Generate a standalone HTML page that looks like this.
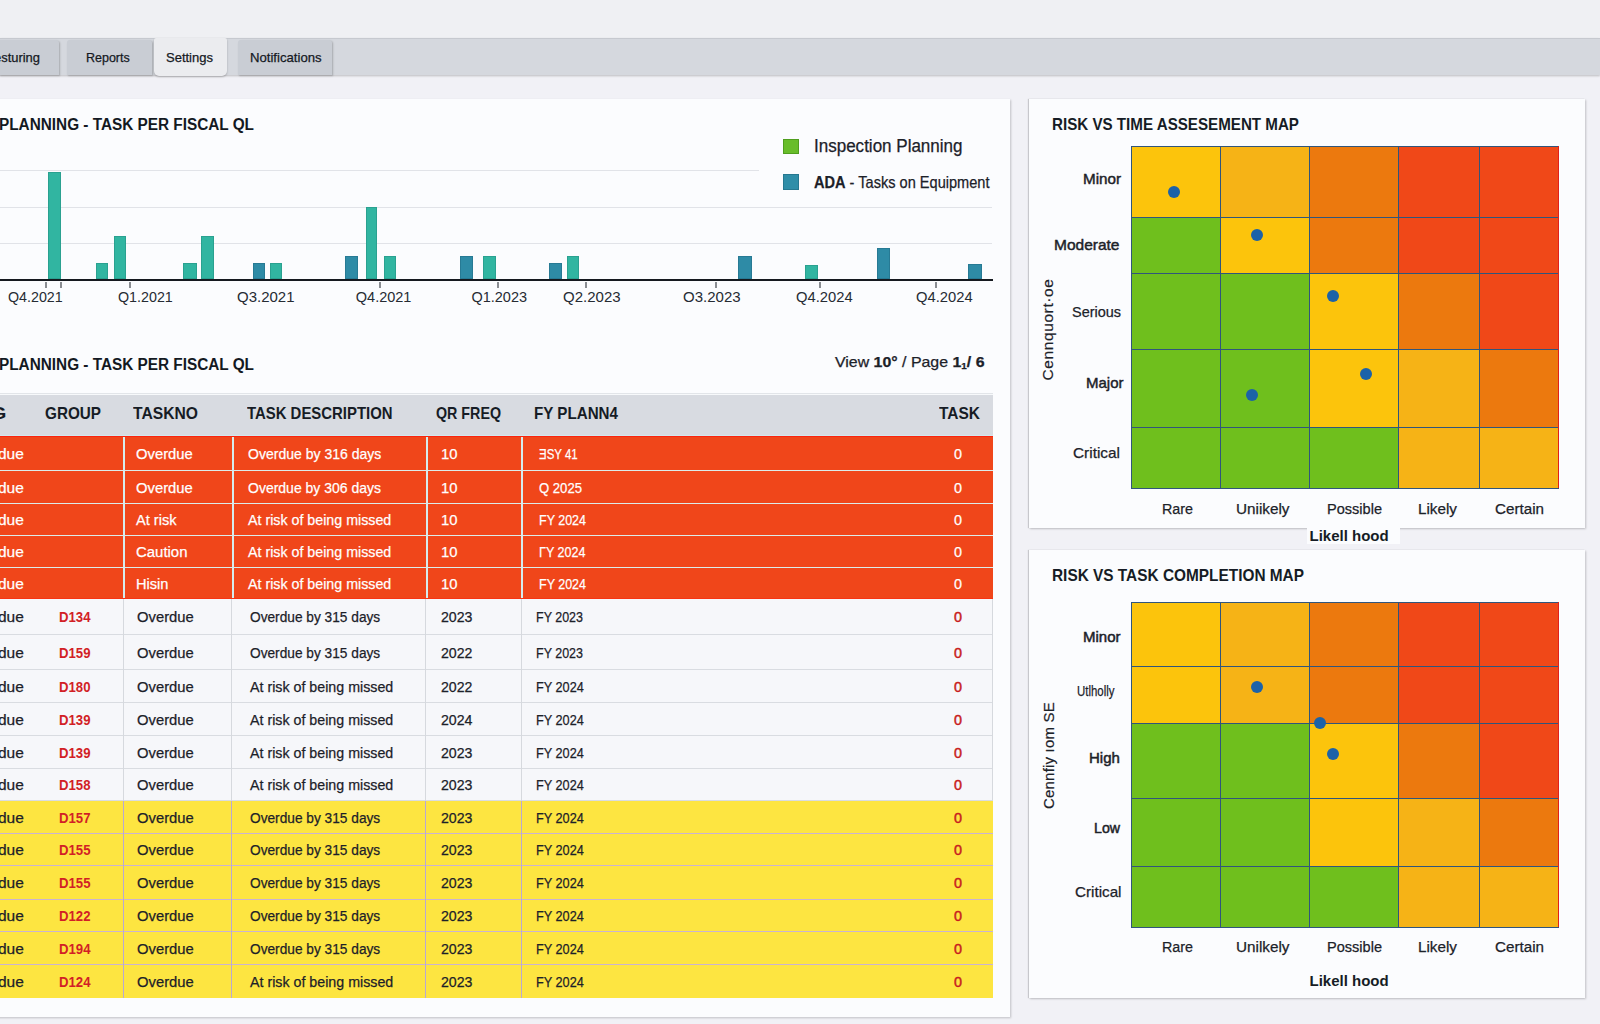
<!DOCTYPE html><html><head><meta charset="utf-8"><style>
*{margin:0;padding:0;box-sizing:border-box}
html,body{width:1600px;height:1024px;overflow:hidden}
body{position:relative;background:#f1f1f6;font-family:"Liberation Sans",sans-serif;color:#1b212b}
.a{position:absolute;white-space:nowrap}
.dot{position:absolute;width:12px;height:12px;border-radius:50%;background:#1c62a8}
</style></head><body>
<div class="a" style="left:0;top:0;width:1600px;height:38px;background:#eff0f3"></div>
<div class="a" style="left:0;top:38px;width:1600px;height:37px;background:#d5d8de;border-top:1px solid #c6c9cf;box-shadow:0 1px 2px rgba(0,0,0,.22)"></div>
<div class="a" style="left:-30px;top:40px;width:89px;height:35px;background:#c9cdd4;border-radius:3px 3px 0 0;box-shadow:1px 1px 2px rgba(0,0,0,.22)"></div>
<div class="a" style="left:-6.00px;top:50.70px;font-size:13px;line-height:13px;color:#15191f;transform:scaleX(0.9946);transform-origin:0 0;-webkit-text-stroke:0.25px #15191f">esturing</div>
<div class="a" style="left:67px;top:40px;width:85px;height:35px;background:#c9cdd4;border-radius:3px 3px 0 0;box-shadow:1px 1px 2px rgba(0,0,0,.22)"></div>
<div class="a" style="left:86.25px;top:50.70px;font-size:13px;line-height:13px;color:#15191f;transform:scaleX(0.9609);transform-origin:0 0;-webkit-text-stroke:0.25px #15191f">Reports</div>
<div class="a" style="left:154px;top:38px;width:73px;height:38px;background:#ebecef;border-radius:2px 2px 5px 5px;box-shadow:0 1px 2px rgba(0,0,0,.25)"></div>
<div class="a" style="left:166.00px;top:50.70px;font-size:13px;line-height:13px;color:#15191f;-webkit-text-stroke:0.25px #15191f">Settings</div>
<div class="a" style="left:238px;top:40px;width:94px;height:35px;background:#c9cdd4;border-radius:3px 3px 0 0;box-shadow:1px 1px 2px rgba(0,0,0,.22)"></div>
<div class="a" style="left:250.20px;top:50.70px;font-size:13px;line-height:13px;color:#15191f;transform:scaleX(1.0111);transform-origin:0 0;-webkit-text-stroke:0.25px #15191f">Notifications</div>
<div class="a" style="left:-10px;top:99px;width:1020px;height:918px;background:#fbfcfe;box-shadow:1px 1px 2px rgba(0,0,0,.2)"></div>
<div class="a" style="left:1029px;top:99px;width:556px;height:429px;background:#fbfcfe;box-shadow:-1px 0 1px rgba(0,0,0,.16),1px 1px 2px rgba(0,0,0,.2)"></div>
<div class="a" style="left:1029px;top:550px;width:556px;height:448px;background:#fbfcfe;box-shadow:-1px 0 1px rgba(0,0,0,.16),1px 1px 2px rgba(0,0,0,.2)"></div>
<div class="a" style="left:-1.50px;top:116.24px;font-size:17.2px;line-height:17.2px;color:#131922;font-weight:bold;transform:scaleX(0.8921);transform-origin:0 0">PLANNING - TASK PER FISCAL QL</div>
<div class="a" style="left:783px;top:139px;width:16px;height:15px;background:#68bd2a;border:1px solid #4f9e1e"></div>
<div class="a" style="left:783px;top:174px;width:16px;height:16px;background:#2f8ea8;border:1px solid #267890"></div>
<div class="a" style="left:813.50px;top:138.44px;font-size:17.5px;line-height:17.5px;color:#1c2129;transform:scaleX(0.9722);transform-origin:0 0;-webkit-text-stroke:0.25px #1c2129">Inspection Planning</div>
<div class="a" style="left:813.50px;top:173.93px;font-size:16.5px;line-height:16.5px;color:#1c2129;transform:scaleX(0.8832);transform-origin:0 0;-webkit-text-stroke:0.25px #1c2129"><b>ADA</b> - Tasks on Equipment</div>
<div class="a" style="left:0;top:170px;width:759px;height:1px;background:#e1e3e8"></div>
<div class="a" style="left:0;top:207px;width:992px;height:1px;background:#e1e3e8"></div>
<div class="a" style="left:0;top:243px;width:992px;height:1px;background:#e1e3e8"></div>
<div class="a" style="left:0;top:278.5px;width:993px;height:2px;background:#15191f"></div>
<div class="a" style="left:48px;top:172px;width:13px;height:107px;background:#31b5a1;border:1px solid #2aa190"></div>
<div class="a" style="left:96px;top:263px;width:12px;height:16px;background:#31b5a1;border:1px solid #2aa190"></div>
<div class="a" style="left:114px;top:236px;width:12px;height:43px;background:#31b5a1;border:1px solid #2aa190"></div>
<div class="a" style="left:183px;top:263px;width:14px;height:16px;background:#31b5a1;border:1px solid #2aa190"></div>
<div class="a" style="left:201px;top:236px;width:13px;height:43px;background:#31b5a1;border:1px solid #2aa190"></div>
<div class="a" style="left:253px;top:263px;width:12px;height:16px;background:#2e8ba6;border:1px solid #277a94"></div>
<div class="a" style="left:270px;top:263px;width:12px;height:16px;background:#31b5a1;border:1px solid #2aa190"></div>
<div class="a" style="left:345px;top:256px;width:13px;height:23px;background:#2e8ba6;border:1px solid #277a94"></div>
<div class="a" style="left:366px;top:207px;width:11px;height:72px;background:#31b5a1;border:1px solid #2aa190"></div>
<div class="a" style="left:384px;top:256px;width:12px;height:23px;background:#31b5a1;border:1px solid #2aa190"></div>
<div class="a" style="left:460px;top:256px;width:13px;height:23px;background:#2e8ba6;border:1px solid #277a94"></div>
<div class="a" style="left:483px;top:256px;width:13px;height:23px;background:#31b5a1;border:1px solid #2aa190"></div>
<div class="a" style="left:549px;top:263px;width:13px;height:16px;background:#2e8ba6;border:1px solid #277a94"></div>
<div class="a" style="left:567px;top:256px;width:12px;height:23px;background:#31b5a1;border:1px solid #2aa190"></div>
<div class="a" style="left:738px;top:256px;width:14px;height:23px;background:#2e8ba6;border:1px solid #277a94"></div>
<div class="a" style="left:805px;top:265px;width:13px;height:14px;background:#31b5a1;border:1px solid #2aa190"></div>
<div class="a" style="left:877px;top:248px;width:13px;height:31px;background:#2e8ba6;border:1px solid #277a94"></div>
<div class="a" style="left:968px;top:264px;width:14px;height:15px;background:#2e8ba6;border:1px solid #277a94"></div>
<div class="a" style="left:45px;top:282px;width:1.5px;height:6px;background:#8a8d92"></div>
<div class="a" style="left:60px;top:282px;width:1.5px;height:6px;background:#8a8d92"></div>
<div class="a" style="left:129px;top:282px;width:1.5px;height:6px;background:#8a8d92"></div>
<div class="a" style="left:379px;top:282px;width:1.5px;height:6px;background:#8a8d92"></div>
<div class="a" style="left:497px;top:282px;width:1.5px;height:6px;background:#8a8d92"></div>
<div class="a" style="left:585px;top:282px;width:1.5px;height:6px;background:#8a8d92"></div>
<div class="a" style="left:715px;top:282px;width:1.5px;height:6px;background:#8a8d92"></div>
<div class="a" style="left:819px;top:282px;width:1.5px;height:6px;background:#8a8d92"></div>
<div class="a" style="left:935px;top:282px;width:1.5px;height:6px;background:#8a8d92"></div>
<div class="a" style="left:7.80px;top:290.23px;font-size:14.5px;line-height:14.5px;color:#262b33;transform:scaleX(0.9831);transform-origin:0 0">Q4.2021</div>
<div class="a" style="left:117.60px;top:290.23px;font-size:14.5px;line-height:14.5px;color:#262b33;transform:scaleX(0.9849);transform-origin:0 0">Q1.2021</div>
<div class="a" style="left:237.00px;top:290.23px;font-size:14.5px;line-height:14.5px;color:#262b33;transform:scaleX(1.0334);transform-origin:0 0">Q3.2021</div>
<div class="a" style="left:355.80px;top:290.23px;font-size:14.5px;line-height:14.5px;color:#262b33">Q4.2021</div>
<div class="a" style="left:471.40px;top:290.23px;font-size:14.5px;line-height:14.5px;color:#262b33">Q1.2023</div>
<div class="a" style="left:562.90px;top:290.23px;font-size:14.5px;line-height:14.5px;color:#262b33;transform:scaleX(1.0352);transform-origin:0 0">Q2.2023</div>
<div class="a" style="left:683.20px;top:290.23px;font-size:14.5px;line-height:14.5px;color:#262b33;transform:scaleX(1.0352);transform-origin:0 0">O3.2023</div>
<div class="a" style="left:795.70px;top:290.23px;font-size:14.5px;line-height:14.5px;color:#262b33;transform:scaleX(1.0172);transform-origin:0 0">Q4.2024</div>
<div class="a" style="left:915.50px;top:290.23px;font-size:14.5px;line-height:14.5px;color:#262b33;transform:scaleX(1.0172);transform-origin:0 0">Q4.2024</div>
<div class="a" style="left:-1.50px;top:355.84px;font-size:17.2px;line-height:17.2px;color:#131922;font-weight:bold;transform:scaleX(0.8921);transform-origin:0 0">PLANNING - TASK PER FISCAL QL</div>
<div class="a" style="left:835.00px;top:355.03px;font-size:14.5px;line-height:14.5px;color:#1c2129;transform:scaleX(1.0965);transform-origin:0 0;-webkit-text-stroke:0.25px #1c2129">View <b>10°</b> / Page <b>1<span style="font-size:9px;vertical-align:-2px">1</span>/ 6</b></div>
<div class="a" style="left:0;top:393px;width:993px;height:43px;background:#d8dbe1;border-top:1px solid #e2e5e9"></div>
<div class="a" style="left:0;top:394px;width:993px;height:1px;background:#f7f9fb"></div>
<div class="a" style="left:0;top:435px;width:993px;height:1px;background:#d3e9ee"></div>
<div class="a" style="left:-10.00px;top:404.83px;font-size:16.5px;line-height:16.5px;color:#161c25;font-weight:bold;transform:scaleX(1.2847);transform-origin:0 0">G</div>
<div class="a" style="left:44.50px;top:404.83px;font-size:16.5px;line-height:16.5px;color:#161c25;font-weight:bold;transform:scaleX(0.9254);transform-origin:0 0">GROUP</div>
<div class="a" style="left:133.00px;top:404.83px;font-size:16.5px;line-height:16.5px;color:#161c25;font-weight:bold;transform:scaleX(0.9496);transform-origin:0 0">TASKNO</div>
<div class="a" style="left:246.50px;top:404.83px;font-size:16.5px;line-height:16.5px;color:#161c25;font-weight:bold;transform:scaleX(0.9035);transform-origin:0 0">TASK DESCRIPTION</div>
<div class="a" style="left:436.00px;top:404.83px;font-size:16.5px;line-height:16.5px;color:#161c25;font-weight:bold;transform:scaleX(0.8647);transform-origin:0 0">QR FREQ</div>
<div class="a" style="left:533.50px;top:404.83px;font-size:16.5px;line-height:16.5px;color:#161c25;font-weight:bold;transform:scaleX(0.9191);transform-origin:0 0">FY PLANN4</div>
<div class="a" style="left:938.50px;top:404.83px;font-size:16.5px;line-height:16.5px;color:#161c25;font-weight:bold;transform:scaleX(0.9381);transform-origin:0 0">TASK</div>
<div class="a" style="left:0;top:436px;width:993px;height:35px;background:#f0461a;border-bottom:1.5px solid #dcecea"></div>
<div class="a" style="left:123px;top:436px;width:1.5px;height:35px;background:#d6eced"></div>
<div class="a" style="left:232px;top:436px;width:1.5px;height:35px;background:#d6eced"></div>
<div class="a" style="left:426px;top:436px;width:1.5px;height:35px;background:#d6eced"></div>
<div class="a" style="left:521px;top:436px;width:1.5px;height:35px;background:#d6eced"></div>
<div class="a" style="left:-2.00px;top:445.78px;font-size:15.5px;line-height:15.5px;color:#ffffff;-webkit-text-stroke:0.25px #ffffff">due</div>
<div class="a" style="left:136.00px;top:445.78px;font-size:15.5px;line-height:15.5px;color:#ffffff;transform:scaleX(0.9554);transform-origin:0 0;-webkit-text-stroke:0.25px #ffffff">Overdue</div>
<div class="a" style="left:248.00px;top:445.78px;font-size:15.5px;line-height:15.5px;color:#ffffff;transform:scaleX(0.9047);transform-origin:0 0;-webkit-text-stroke:0.25px #ffffff">Overdue by 316 days</div>
<div class="a" style="left:441.00px;top:445.78px;font-size:15.5px;line-height:15.5px;color:#ffffff;transform:scaleX(0.9565);transform-origin:0 0;-webkit-text-stroke:0.25px #ffffff">10</div>
<div class="a" style="left:538.50px;top:445.78px;font-size:15.5px;line-height:15.5px;color:#ffffff;transform:scaleX(0.7400);transform-origin:0 0;-webkit-text-stroke:0.25px #ffffff">ƎSY 41</div>
<div class="a" style="left:954.30px;top:445.78px;font-size:15.5px;line-height:15.5px;color:#ffffff;transform:scaleX(0.9275);transform-origin:0 0;-webkit-text-stroke:0.25px #ffffff">0</div>
<div class="a" style="left:0;top:471px;width:993px;height:33px;background:#f0461a;border-bottom:1.5px solid #dcecea"></div>
<div class="a" style="left:123px;top:471px;width:1.5px;height:33px;background:#d6eced"></div>
<div class="a" style="left:232px;top:471px;width:1.5px;height:33px;background:#d6eced"></div>
<div class="a" style="left:426px;top:471px;width:1.5px;height:33px;background:#d6eced"></div>
<div class="a" style="left:521px;top:471px;width:1.5px;height:33px;background:#d6eced"></div>
<div class="a" style="left:-2.00px;top:479.78px;font-size:15.5px;line-height:15.5px;color:#ffffff;-webkit-text-stroke:0.25px #ffffff">due</div>
<div class="a" style="left:136.00px;top:479.78px;font-size:15.5px;line-height:15.5px;color:#ffffff;transform:scaleX(0.9554);transform-origin:0 0;-webkit-text-stroke:0.25px #ffffff">Overdue</div>
<div class="a" style="left:248.00px;top:479.78px;font-size:15.5px;line-height:15.5px;color:#ffffff;transform:scaleX(0.9027);transform-origin:0 0;-webkit-text-stroke:0.25px #ffffff">Overdue by 306 days</div>
<div class="a" style="left:441.00px;top:479.78px;font-size:15.5px;line-height:15.5px;color:#ffffff;transform:scaleX(0.9565);transform-origin:0 0;-webkit-text-stroke:0.25px #ffffff">10</div>
<div class="a" style="left:538.50px;top:479.78px;font-size:15.5px;line-height:15.5px;color:#ffffff;transform:scaleX(0.8455);transform-origin:0 0;-webkit-text-stroke:0.25px #ffffff">Q 2025</div>
<div class="a" style="left:954.30px;top:479.78px;font-size:15.5px;line-height:15.5px;color:#ffffff;transform:scaleX(0.9275);transform-origin:0 0;-webkit-text-stroke:0.25px #ffffff">0</div>
<div class="a" style="left:0;top:504px;width:993px;height:32px;background:#f0461a;border-bottom:1.5px solid #dcecea"></div>
<div class="a" style="left:123px;top:504px;width:1.5px;height:32px;background:#d6eced"></div>
<div class="a" style="left:232px;top:504px;width:1.5px;height:32px;background:#d6eced"></div>
<div class="a" style="left:426px;top:504px;width:1.5px;height:32px;background:#d6eced"></div>
<div class="a" style="left:521px;top:504px;width:1.5px;height:32px;background:#d6eced"></div>
<div class="a" style="left:-2.00px;top:512.28px;font-size:15.5px;line-height:15.5px;color:#ffffff;-webkit-text-stroke:0.25px #ffffff">due</div>
<div class="a" style="left:136.00px;top:512.28px;font-size:15.5px;line-height:15.5px;color:#ffffff;transform:scaleX(0.9405);transform-origin:0 0;-webkit-text-stroke:0.25px #ffffff">At risk</div>
<div class="a" style="left:248.00px;top:512.28px;font-size:15.5px;line-height:15.5px;color:#ffffff;transform:scaleX(0.9190);transform-origin:0 0;-webkit-text-stroke:0.25px #ffffff">At risk of being missed</div>
<div class="a" style="left:441.00px;top:512.28px;font-size:15.5px;line-height:15.5px;color:#ffffff;transform:scaleX(0.9565);transform-origin:0 0;-webkit-text-stroke:0.25px #ffffff">10</div>
<div class="a" style="left:538.50px;top:512.28px;font-size:15.5px;line-height:15.5px;color:#ffffff;transform:scaleX(0.8058);transform-origin:0 0;-webkit-text-stroke:0.25px #ffffff">FY 2024</div>
<div class="a" style="left:954.30px;top:512.28px;font-size:15.5px;line-height:15.5px;color:#ffffff;transform:scaleX(0.9275);transform-origin:0 0;-webkit-text-stroke:0.25px #ffffff">0</div>
<div class="a" style="left:0;top:536px;width:993px;height:32px;background:#f0461a;border-bottom:1.5px solid #dcecea"></div>
<div class="a" style="left:123px;top:536px;width:1.5px;height:32px;background:#d6eced"></div>
<div class="a" style="left:232px;top:536px;width:1.5px;height:32px;background:#d6eced"></div>
<div class="a" style="left:426px;top:536px;width:1.5px;height:32px;background:#d6eced"></div>
<div class="a" style="left:521px;top:536px;width:1.5px;height:32px;background:#d6eced"></div>
<div class="a" style="left:-2.00px;top:544.28px;font-size:15.5px;line-height:15.5px;color:#ffffff;-webkit-text-stroke:0.25px #ffffff">due</div>
<div class="a" style="left:136.00px;top:544.28px;font-size:15.5px;line-height:15.5px;color:#ffffff;transform:scaleX(0.9637);transform-origin:0 0;-webkit-text-stroke:0.25px #ffffff">Caution</div>
<div class="a" style="left:248.00px;top:544.28px;font-size:15.5px;line-height:15.5px;color:#ffffff;transform:scaleX(0.9190);transform-origin:0 0;-webkit-text-stroke:0.25px #ffffff">At risk of being missed</div>
<div class="a" style="left:441.00px;top:544.28px;font-size:15.5px;line-height:15.5px;color:#ffffff;transform:scaleX(0.9565);transform-origin:0 0;-webkit-text-stroke:0.25px #ffffff">10</div>
<div class="a" style="left:538.50px;top:544.28px;font-size:15.5px;line-height:15.5px;color:#ffffff;transform:scaleX(0.8102);transform-origin:0 0;-webkit-text-stroke:0.25px #ffffff">ΓY 2024</div>
<div class="a" style="left:954.30px;top:544.28px;font-size:15.5px;line-height:15.5px;color:#ffffff;transform:scaleX(0.9275);transform-origin:0 0;-webkit-text-stroke:0.25px #ffffff">0</div>
<div class="a" style="left:0;top:568px;width:993px;height:31px;background:#f0461a;border-bottom:1.5px solid #dcecea"></div>
<div class="a" style="left:123px;top:568px;width:1.5px;height:31px;background:#d6eced"></div>
<div class="a" style="left:232px;top:568px;width:1.5px;height:31px;background:#d6eced"></div>
<div class="a" style="left:426px;top:568px;width:1.5px;height:31px;background:#d6eced"></div>
<div class="a" style="left:521px;top:568px;width:1.5px;height:31px;background:#d6eced"></div>
<div class="a" style="left:-2.00px;top:575.78px;font-size:15.5px;line-height:15.5px;color:#ffffff;-webkit-text-stroke:0.25px #ffffff">due</div>
<div class="a" style="left:136.00px;top:575.78px;font-size:15.5px;line-height:15.5px;color:#ffffff;transform:scaleX(0.9433);transform-origin:0 0;-webkit-text-stroke:0.25px #ffffff">Hisin</div>
<div class="a" style="left:248.00px;top:575.78px;font-size:15.5px;line-height:15.5px;color:#ffffff;transform:scaleX(0.9190);transform-origin:0 0;-webkit-text-stroke:0.25px #ffffff">At risk of being missed</div>
<div class="a" style="left:441.00px;top:575.78px;font-size:15.5px;line-height:15.5px;color:#ffffff;transform:scaleX(0.9565);transform-origin:0 0;-webkit-text-stroke:0.25px #ffffff">10</div>
<div class="a" style="left:538.50px;top:575.78px;font-size:15.5px;line-height:15.5px;color:#ffffff;transform:scaleX(0.8058);transform-origin:0 0;-webkit-text-stroke:0.25px #ffffff">FY 2024</div>
<div class="a" style="left:954.30px;top:575.78px;font-size:15.5px;line-height:15.5px;color:#ffffff;transform:scaleX(0.9275);transform-origin:0 0;-webkit-text-stroke:0.25px #ffffff">0</div>
<div class="a" style="left:0;top:599px;width:993px;height:36px;background:#f6f7fa;border-bottom:1.5px solid #d9dce1"></div>
<div class="a" style="left:123px;top:599px;width:1px;height:36px;background:#d6d9de"></div>
<div class="a" style="left:231px;top:599px;width:1px;height:36px;background:#d6d9de"></div>
<div class="a" style="left:425px;top:599px;width:1px;height:36px;background:#d6d9de"></div>
<div class="a" style="left:521px;top:599px;width:1px;height:36px;background:#d6d9de"></div>
<div class="a" style="left:-2.00px;top:609.28px;font-size:15.5px;line-height:15.5px;color:#1c2129;-webkit-text-stroke:0.25px #1c2129">due</div>
<div class="a" style="left:58.50px;top:609.28px;font-size:15.5px;line-height:15.5px;color:#d21f26;font-weight:bold;transform:scaleX(0.8499);transform-origin:0 0">D134</div>
<div class="a" style="left:137.00px;top:609.28px;font-size:15.5px;line-height:15.5px;color:#1c2129;transform:scaleX(0.9554);transform-origin:0 0;-webkit-text-stroke:0.25px #1c2129">Overdue</div>
<div class="a" style="left:249.50px;top:609.28px;font-size:15.5px;line-height:15.5px;color:#1c2129;transform:scaleX(0.8836);transform-origin:0 0;-webkit-text-stroke:0.25px #1c2129">Overdue by 315 days</div>
<div class="a" style="left:441.00px;top:609.28px;font-size:15.5px;line-height:15.5px;color:#1c2129;transform:scaleX(0.9135);transform-origin:0 0;-webkit-text-stroke:0.25px #1c2129">2023</div>
<div class="a" style="left:536.00px;top:609.28px;font-size:15.5px;line-height:15.5px;color:#1c2129;transform:scaleX(0.8058);transform-origin:0 0;-webkit-text-stroke:0.25px #1c2129">FY 2023</div>
<div class="a" style="left:954.30px;top:609.28px;font-size:15.5px;line-height:15.5px;color:#c81c20;transform:scaleX(0.9275);transform-origin:0 0;-webkit-text-stroke:0.5px #c81c20">0</div>
<div class="a" style="left:0;top:635px;width:993px;height:35px;background:#f6f7fa;border-bottom:1.5px solid #d9dce1"></div>
<div class="a" style="left:123px;top:635px;width:1px;height:35px;background:#d6d9de"></div>
<div class="a" style="left:231px;top:635px;width:1px;height:35px;background:#d6d9de"></div>
<div class="a" style="left:425px;top:635px;width:1px;height:35px;background:#d6d9de"></div>
<div class="a" style="left:521px;top:635px;width:1px;height:35px;background:#d6d9de"></div>
<div class="a" style="left:-2.00px;top:644.78px;font-size:15.5px;line-height:15.5px;color:#1c2129;-webkit-text-stroke:0.25px #1c2129">due</div>
<div class="a" style="left:58.50px;top:644.78px;font-size:15.5px;line-height:15.5px;color:#d21f26;font-weight:bold;transform:scaleX(0.8499);transform-origin:0 0">D159</div>
<div class="a" style="left:137.00px;top:644.78px;font-size:15.5px;line-height:15.5px;color:#1c2129;transform:scaleX(0.9554);transform-origin:0 0;-webkit-text-stroke:0.25px #1c2129">Overdue</div>
<div class="a" style="left:249.50px;top:644.78px;font-size:15.5px;line-height:15.5px;color:#1c2129;transform:scaleX(0.8836);transform-origin:0 0;-webkit-text-stroke:0.25px #1c2129">Overdue by 315 days</div>
<div class="a" style="left:441.00px;top:644.78px;font-size:15.5px;line-height:15.5px;color:#1c2129;transform:scaleX(0.9135);transform-origin:0 0;-webkit-text-stroke:0.25px #1c2129">2022</div>
<div class="a" style="left:536.00px;top:644.78px;font-size:15.5px;line-height:15.5px;color:#1c2129;transform:scaleX(0.8058);transform-origin:0 0;-webkit-text-stroke:0.25px #1c2129">FY 2023</div>
<div class="a" style="left:954.30px;top:644.78px;font-size:15.5px;line-height:15.5px;color:#c81c20;transform:scaleX(0.9275);transform-origin:0 0;-webkit-text-stroke:0.5px #c81c20">0</div>
<div class="a" style="left:0;top:670px;width:993px;height:33px;background:#f6f7fa;border-bottom:1.5px solid #d9dce1"></div>
<div class="a" style="left:123px;top:670px;width:1px;height:33px;background:#d6d9de"></div>
<div class="a" style="left:231px;top:670px;width:1px;height:33px;background:#d6d9de"></div>
<div class="a" style="left:425px;top:670px;width:1px;height:33px;background:#d6d9de"></div>
<div class="a" style="left:521px;top:670px;width:1px;height:33px;background:#d6d9de"></div>
<div class="a" style="left:-2.00px;top:678.78px;font-size:15.5px;line-height:15.5px;color:#1c2129;-webkit-text-stroke:0.25px #1c2129">due</div>
<div class="a" style="left:58.50px;top:678.78px;font-size:15.5px;line-height:15.5px;color:#d21f26;font-weight:bold;transform:scaleX(0.8499);transform-origin:0 0">D180</div>
<div class="a" style="left:137.00px;top:678.78px;font-size:15.5px;line-height:15.5px;color:#1c2129;transform:scaleX(0.9554);transform-origin:0 0;-webkit-text-stroke:0.25px #1c2129">Overdue</div>
<div class="a" style="left:249.50px;top:678.78px;font-size:15.5px;line-height:15.5px;color:#1c2129;transform:scaleX(0.9190);transform-origin:0 0;-webkit-text-stroke:0.25px #1c2129">At risk of being missed</div>
<div class="a" style="left:441.00px;top:678.78px;font-size:15.5px;line-height:15.5px;color:#1c2129;transform:scaleX(0.9135);transform-origin:0 0;-webkit-text-stroke:0.25px #1c2129">2022</div>
<div class="a" style="left:536.00px;top:678.78px;font-size:15.5px;line-height:15.5px;color:#1c2129;transform:scaleX(0.8195);transform-origin:0 0;-webkit-text-stroke:0.25px #1c2129">FY 2024</div>
<div class="a" style="left:954.30px;top:678.78px;font-size:15.5px;line-height:15.5px;color:#c81c20;transform:scaleX(0.9275);transform-origin:0 0;-webkit-text-stroke:0.5px #c81c20">0</div>
<div class="a" style="left:0;top:703px;width:993px;height:33px;background:#f6f7fa;border-bottom:1.5px solid #d9dce1"></div>
<div class="a" style="left:123px;top:703px;width:1px;height:33px;background:#d6d9de"></div>
<div class="a" style="left:231px;top:703px;width:1px;height:33px;background:#d6d9de"></div>
<div class="a" style="left:425px;top:703px;width:1px;height:33px;background:#d6d9de"></div>
<div class="a" style="left:521px;top:703px;width:1px;height:33px;background:#d6d9de"></div>
<div class="a" style="left:-2.00px;top:711.78px;font-size:15.5px;line-height:15.5px;color:#1c2129;-webkit-text-stroke:0.25px #1c2129">due</div>
<div class="a" style="left:58.50px;top:711.78px;font-size:15.5px;line-height:15.5px;color:#d21f26;font-weight:bold;transform:scaleX(0.8499);transform-origin:0 0">D139</div>
<div class="a" style="left:137.00px;top:711.78px;font-size:15.5px;line-height:15.5px;color:#1c2129;transform:scaleX(0.9554);transform-origin:0 0;-webkit-text-stroke:0.25px #1c2129">Overdue</div>
<div class="a" style="left:249.50px;top:711.78px;font-size:15.5px;line-height:15.5px;color:#1c2129;transform:scaleX(0.9190);transform-origin:0 0;-webkit-text-stroke:0.25px #1c2129">At risk of being missed</div>
<div class="a" style="left:441.00px;top:711.78px;font-size:15.5px;line-height:15.5px;color:#1c2129;transform:scaleX(0.9135);transform-origin:0 0;-webkit-text-stroke:0.25px #1c2129">2024</div>
<div class="a" style="left:536.00px;top:711.78px;font-size:15.5px;line-height:15.5px;color:#1c2129;transform:scaleX(0.8195);transform-origin:0 0;-webkit-text-stroke:0.25px #1c2129">FY 2024</div>
<div class="a" style="left:954.30px;top:711.78px;font-size:15.5px;line-height:15.5px;color:#c81c20;transform:scaleX(0.9275);transform-origin:0 0;-webkit-text-stroke:0.5px #c81c20">0</div>
<div class="a" style="left:0;top:736px;width:993px;height:33px;background:#f6f7fa;border-bottom:1.5px solid #d9dce1"></div>
<div class="a" style="left:123px;top:736px;width:1px;height:33px;background:#d6d9de"></div>
<div class="a" style="left:231px;top:736px;width:1px;height:33px;background:#d6d9de"></div>
<div class="a" style="left:425px;top:736px;width:1px;height:33px;background:#d6d9de"></div>
<div class="a" style="left:521px;top:736px;width:1px;height:33px;background:#d6d9de"></div>
<div class="a" style="left:-2.00px;top:744.78px;font-size:15.5px;line-height:15.5px;color:#1c2129;-webkit-text-stroke:0.25px #1c2129">due</div>
<div class="a" style="left:58.50px;top:744.78px;font-size:15.5px;line-height:15.5px;color:#d21f26;font-weight:bold;transform:scaleX(0.8499);transform-origin:0 0">D139</div>
<div class="a" style="left:137.00px;top:744.78px;font-size:15.5px;line-height:15.5px;color:#1c2129;transform:scaleX(0.9554);transform-origin:0 0;-webkit-text-stroke:0.25px #1c2129">Overdue</div>
<div class="a" style="left:249.50px;top:744.78px;font-size:15.5px;line-height:15.5px;color:#1c2129;transform:scaleX(0.9190);transform-origin:0 0;-webkit-text-stroke:0.25px #1c2129">At risk of being missed</div>
<div class="a" style="left:441.00px;top:744.78px;font-size:15.5px;line-height:15.5px;color:#1c2129;transform:scaleX(0.9135);transform-origin:0 0;-webkit-text-stroke:0.25px #1c2129">2023</div>
<div class="a" style="left:536.00px;top:744.78px;font-size:15.5px;line-height:15.5px;color:#1c2129;transform:scaleX(0.8195);transform-origin:0 0;-webkit-text-stroke:0.25px #1c2129">FY 2024</div>
<div class="a" style="left:954.30px;top:744.78px;font-size:15.5px;line-height:15.5px;color:#c81c20;transform:scaleX(0.9275);transform-origin:0 0;-webkit-text-stroke:0.5px #c81c20">0</div>
<div class="a" style="left:0;top:769px;width:993px;height:32px;background:#f6f7fa;border-bottom:1.5px solid #d9dce1"></div>
<div class="a" style="left:123px;top:769px;width:1px;height:32px;background:#d6d9de"></div>
<div class="a" style="left:231px;top:769px;width:1px;height:32px;background:#d6d9de"></div>
<div class="a" style="left:425px;top:769px;width:1px;height:32px;background:#d6d9de"></div>
<div class="a" style="left:521px;top:769px;width:1px;height:32px;background:#d6d9de"></div>
<div class="a" style="left:-2.00px;top:777.28px;font-size:15.5px;line-height:15.5px;color:#1c2129;-webkit-text-stroke:0.25px #1c2129">due</div>
<div class="a" style="left:58.50px;top:777.28px;font-size:15.5px;line-height:15.5px;color:#d21f26;font-weight:bold;transform:scaleX(0.8499);transform-origin:0 0">D158</div>
<div class="a" style="left:137.00px;top:777.28px;font-size:15.5px;line-height:15.5px;color:#1c2129;transform:scaleX(0.9554);transform-origin:0 0;-webkit-text-stroke:0.25px #1c2129">Overdue</div>
<div class="a" style="left:249.50px;top:777.28px;font-size:15.5px;line-height:15.5px;color:#1c2129;transform:scaleX(0.9190);transform-origin:0 0;-webkit-text-stroke:0.25px #1c2129">At risk of being missed</div>
<div class="a" style="left:441.00px;top:777.28px;font-size:15.5px;line-height:15.5px;color:#1c2129;transform:scaleX(0.9135);transform-origin:0 0;-webkit-text-stroke:0.25px #1c2129">2023</div>
<div class="a" style="left:536.00px;top:777.28px;font-size:15.5px;line-height:15.5px;color:#1c2129;transform:scaleX(0.8195);transform-origin:0 0;-webkit-text-stroke:0.25px #1c2129">FY 2024</div>
<div class="a" style="left:954.30px;top:777.28px;font-size:15.5px;line-height:15.5px;color:#c81c20;transform:scaleX(0.9275);transform-origin:0 0;-webkit-text-stroke:0.5px #c81c20">0</div>
<div class="a" style="left:0;top:801px;width:993px;height:33px;background:#fde541;border-bottom:1.5px solid #c9b3d2"></div>
<div class="a" style="left:123px;top:801px;width:1px;height:33px;background:#b9a8d2"></div>
<div class="a" style="left:231px;top:801px;width:1px;height:33px;background:#b9a8d2"></div>
<div class="a" style="left:425px;top:801px;width:1px;height:33px;background:#b9a8d2"></div>
<div class="a" style="left:521px;top:801px;width:1px;height:33px;background:#b9a8d2"></div>
<div class="a" style="left:-2.00px;top:809.78px;font-size:15.5px;line-height:15.5px;color:#1c2129;-webkit-text-stroke:0.25px #1c2129">due</div>
<div class="a" style="left:58.50px;top:809.78px;font-size:15.5px;line-height:15.5px;color:#d21f26;font-weight:bold;transform:scaleX(0.8499);transform-origin:0 0">D157</div>
<div class="a" style="left:137.00px;top:809.78px;font-size:15.5px;line-height:15.5px;color:#1c2129;transform:scaleX(0.9554);transform-origin:0 0;-webkit-text-stroke:0.25px #1c2129">Overdue</div>
<div class="a" style="left:249.50px;top:809.78px;font-size:15.5px;line-height:15.5px;color:#1c2129;transform:scaleX(0.8836);transform-origin:0 0;-webkit-text-stroke:0.25px #1c2129">Overdue by 315 days</div>
<div class="a" style="left:441.00px;top:809.78px;font-size:15.5px;line-height:15.5px;color:#1c2129;transform:scaleX(0.9135);transform-origin:0 0;-webkit-text-stroke:0.25px #1c2129">2023</div>
<div class="a" style="left:536.00px;top:809.78px;font-size:15.5px;line-height:15.5px;color:#1c2129;transform:scaleX(0.8195);transform-origin:0 0;-webkit-text-stroke:0.25px #1c2129">FY 2024</div>
<div class="a" style="left:954.30px;top:809.78px;font-size:15.5px;line-height:15.5px;color:#c81c20;transform:scaleX(0.9275);transform-origin:0 0;-webkit-text-stroke:0.5px #c81c20">0</div>
<div class="a" style="left:0;top:834px;width:993px;height:32px;background:#fde541;border-bottom:1.5px solid #c9b3d2"></div>
<div class="a" style="left:123px;top:834px;width:1px;height:32px;background:#b9a8d2"></div>
<div class="a" style="left:231px;top:834px;width:1px;height:32px;background:#b9a8d2"></div>
<div class="a" style="left:425px;top:834px;width:1px;height:32px;background:#b9a8d2"></div>
<div class="a" style="left:521px;top:834px;width:1px;height:32px;background:#b9a8d2"></div>
<div class="a" style="left:-2.00px;top:842.28px;font-size:15.5px;line-height:15.5px;color:#1c2129;-webkit-text-stroke:0.25px #1c2129">due</div>
<div class="a" style="left:58.50px;top:842.28px;font-size:15.5px;line-height:15.5px;color:#d21f26;font-weight:bold;transform:scaleX(0.8499);transform-origin:0 0">D155</div>
<div class="a" style="left:137.00px;top:842.28px;font-size:15.5px;line-height:15.5px;color:#1c2129;transform:scaleX(0.9554);transform-origin:0 0;-webkit-text-stroke:0.25px #1c2129">Overdue</div>
<div class="a" style="left:249.50px;top:842.28px;font-size:15.5px;line-height:15.5px;color:#1c2129;transform:scaleX(0.8836);transform-origin:0 0;-webkit-text-stroke:0.25px #1c2129">Overdue by 315 days</div>
<div class="a" style="left:441.00px;top:842.28px;font-size:15.5px;line-height:15.5px;color:#1c2129;transform:scaleX(0.9135);transform-origin:0 0;-webkit-text-stroke:0.25px #1c2129">2023</div>
<div class="a" style="left:536.00px;top:842.28px;font-size:15.5px;line-height:15.5px;color:#1c2129;transform:scaleX(0.8195);transform-origin:0 0;-webkit-text-stroke:0.25px #1c2129">FY 2024</div>
<div class="a" style="left:954.30px;top:842.28px;font-size:15.5px;line-height:15.5px;color:#c81c20;transform:scaleX(0.9275);transform-origin:0 0;-webkit-text-stroke:0.5px #c81c20">0</div>
<div class="a" style="left:0;top:866px;width:993px;height:34px;background:#fde541;border-bottom:1.5px solid #c9b3d2"></div>
<div class="a" style="left:123px;top:866px;width:1px;height:34px;background:#b9a8d2"></div>
<div class="a" style="left:231px;top:866px;width:1px;height:34px;background:#b9a8d2"></div>
<div class="a" style="left:425px;top:866px;width:1px;height:34px;background:#b9a8d2"></div>
<div class="a" style="left:521px;top:866px;width:1px;height:34px;background:#b9a8d2"></div>
<div class="a" style="left:-2.00px;top:875.28px;font-size:15.5px;line-height:15.5px;color:#1c2129;-webkit-text-stroke:0.25px #1c2129">due</div>
<div class="a" style="left:58.50px;top:875.28px;font-size:15.5px;line-height:15.5px;color:#d21f26;font-weight:bold;transform:scaleX(0.8499);transform-origin:0 0">D155</div>
<div class="a" style="left:137.00px;top:875.28px;font-size:15.5px;line-height:15.5px;color:#1c2129;transform:scaleX(0.9554);transform-origin:0 0;-webkit-text-stroke:0.25px #1c2129">Overdue</div>
<div class="a" style="left:249.50px;top:875.28px;font-size:15.5px;line-height:15.5px;color:#1c2129;transform:scaleX(0.8836);transform-origin:0 0;-webkit-text-stroke:0.25px #1c2129">Overdue by 315 days</div>
<div class="a" style="left:441.00px;top:875.28px;font-size:15.5px;line-height:15.5px;color:#1c2129;transform:scaleX(0.9135);transform-origin:0 0;-webkit-text-stroke:0.25px #1c2129">2023</div>
<div class="a" style="left:536.00px;top:875.28px;font-size:15.5px;line-height:15.5px;color:#1c2129;transform:scaleX(0.8195);transform-origin:0 0;-webkit-text-stroke:0.25px #1c2129">FY 2024</div>
<div class="a" style="left:954.30px;top:875.28px;font-size:15.5px;line-height:15.5px;color:#c81c20;transform:scaleX(0.9275);transform-origin:0 0;-webkit-text-stroke:0.5px #c81c20">0</div>
<div class="a" style="left:0;top:900px;width:993px;height:32px;background:#fde541;border-bottom:1.5px solid #c9b3d2"></div>
<div class="a" style="left:123px;top:900px;width:1px;height:32px;background:#b9a8d2"></div>
<div class="a" style="left:231px;top:900px;width:1px;height:32px;background:#b9a8d2"></div>
<div class="a" style="left:425px;top:900px;width:1px;height:32px;background:#b9a8d2"></div>
<div class="a" style="left:521px;top:900px;width:1px;height:32px;background:#b9a8d2"></div>
<div class="a" style="left:-2.00px;top:908.28px;font-size:15.5px;line-height:15.5px;color:#1c2129;-webkit-text-stroke:0.25px #1c2129">due</div>
<div class="a" style="left:58.50px;top:908.28px;font-size:15.5px;line-height:15.5px;color:#d21f26;font-weight:bold;transform:scaleX(0.8499);transform-origin:0 0">D122</div>
<div class="a" style="left:137.00px;top:908.28px;font-size:15.5px;line-height:15.5px;color:#1c2129;transform:scaleX(0.9554);transform-origin:0 0;-webkit-text-stroke:0.25px #1c2129">Overdue</div>
<div class="a" style="left:249.50px;top:908.28px;font-size:15.5px;line-height:15.5px;color:#1c2129;transform:scaleX(0.8836);transform-origin:0 0;-webkit-text-stroke:0.25px #1c2129">Overdue by 315 days</div>
<div class="a" style="left:441.00px;top:908.28px;font-size:15.5px;line-height:15.5px;color:#1c2129;transform:scaleX(0.9135);transform-origin:0 0;-webkit-text-stroke:0.25px #1c2129">2023</div>
<div class="a" style="left:536.00px;top:908.28px;font-size:15.5px;line-height:15.5px;color:#1c2129;transform:scaleX(0.8195);transform-origin:0 0;-webkit-text-stroke:0.25px #1c2129">FY 2024</div>
<div class="a" style="left:954.30px;top:908.28px;font-size:15.5px;line-height:15.5px;color:#c81c20;transform:scaleX(0.9275);transform-origin:0 0;-webkit-text-stroke:0.5px #c81c20">0</div>
<div class="a" style="left:0;top:932px;width:993px;height:33px;background:#fde541;border-bottom:1.5px solid #c9b3d2"></div>
<div class="a" style="left:123px;top:932px;width:1px;height:33px;background:#b9a8d2"></div>
<div class="a" style="left:231px;top:932px;width:1px;height:33px;background:#b9a8d2"></div>
<div class="a" style="left:425px;top:932px;width:1px;height:33px;background:#b9a8d2"></div>
<div class="a" style="left:521px;top:932px;width:1px;height:33px;background:#b9a8d2"></div>
<div class="a" style="left:-2.00px;top:940.78px;font-size:15.5px;line-height:15.5px;color:#1c2129;-webkit-text-stroke:0.25px #1c2129">due</div>
<div class="a" style="left:58.50px;top:940.78px;font-size:15.5px;line-height:15.5px;color:#d21f26;font-weight:bold;transform:scaleX(0.8499);transform-origin:0 0">D194</div>
<div class="a" style="left:137.00px;top:940.78px;font-size:15.5px;line-height:15.5px;color:#1c2129;transform:scaleX(0.9554);transform-origin:0 0;-webkit-text-stroke:0.25px #1c2129">Overdue</div>
<div class="a" style="left:249.50px;top:940.78px;font-size:15.5px;line-height:15.5px;color:#1c2129;transform:scaleX(0.8836);transform-origin:0 0;-webkit-text-stroke:0.25px #1c2129">Overdue by 315 days</div>
<div class="a" style="left:441.00px;top:940.78px;font-size:15.5px;line-height:15.5px;color:#1c2129;transform:scaleX(0.9135);transform-origin:0 0;-webkit-text-stroke:0.25px #1c2129">2023</div>
<div class="a" style="left:536.00px;top:940.78px;font-size:15.5px;line-height:15.5px;color:#1c2129;transform:scaleX(0.8195);transform-origin:0 0;-webkit-text-stroke:0.25px #1c2129">FY 2024</div>
<div class="a" style="left:954.30px;top:940.78px;font-size:15.5px;line-height:15.5px;color:#c81c20;transform:scaleX(0.9275);transform-origin:0 0;-webkit-text-stroke:0.5px #c81c20">0</div>
<div class="a" style="left:0;top:965px;width:993px;height:32.5px;background:#fde541;border-bottom:none"></div>
<div class="a" style="left:123px;top:965px;width:1px;height:32.5px;background:#b9a8d2"></div>
<div class="a" style="left:231px;top:965px;width:1px;height:32.5px;background:#b9a8d2"></div>
<div class="a" style="left:425px;top:965px;width:1px;height:32.5px;background:#b9a8d2"></div>
<div class="a" style="left:521px;top:965px;width:1px;height:32.5px;background:#b9a8d2"></div>
<div class="a" style="left:-2.00px;top:973.53px;font-size:15.5px;line-height:15.5px;color:#1c2129;-webkit-text-stroke:0.25px #1c2129">due</div>
<div class="a" style="left:58.50px;top:973.53px;font-size:15.5px;line-height:15.5px;color:#d21f26;font-weight:bold;transform:scaleX(0.8499);transform-origin:0 0">D124</div>
<div class="a" style="left:137.00px;top:973.53px;font-size:15.5px;line-height:15.5px;color:#1c2129;transform:scaleX(0.9554);transform-origin:0 0;-webkit-text-stroke:0.25px #1c2129">Overdue</div>
<div class="a" style="left:249.50px;top:973.53px;font-size:15.5px;line-height:15.5px;color:#1c2129;transform:scaleX(0.9190);transform-origin:0 0;-webkit-text-stroke:0.25px #1c2129">At risk of being missed</div>
<div class="a" style="left:441.00px;top:973.53px;font-size:15.5px;line-height:15.5px;color:#1c2129;transform:scaleX(0.9135);transform-origin:0 0;-webkit-text-stroke:0.25px #1c2129">2023</div>
<div class="a" style="left:536.00px;top:973.53px;font-size:15.5px;line-height:15.5px;color:#1c2129;transform:scaleX(0.8195);transform-origin:0 0;-webkit-text-stroke:0.25px #1c2129">FY 2024</div>
<div class="a" style="left:954.30px;top:973.53px;font-size:15.5px;line-height:15.5px;color:#c81c20;transform:scaleX(0.9275);transform-origin:0 0;-webkit-text-stroke:0.5px #c81c20">0</div>
<div class="a" style="left:992px;top:599px;width:1px;height:202px;background:#d6d9de"></div>
<div class="a" style="left:0;top:436px;width:993px;height:1px;background:#fb2410"></div>
<div class="a" style="left:0;top:598px;width:993px;height:1px;background:#f83414"></div>
<div class="a" style="left:1052.00px;top:116.03px;font-size:16.5px;line-height:16.5px;color:#161c25;font-weight:bold;transform:scaleX(0.9184);transform-origin:0 0">RISK VS TIME ASSESEMENT MAP</div>
<div class="a" style="left:1130.5px;top:146px;width:89.0px;height:71px;background:#fcc40c;border-left:1px solid #30557c;border-top:1px solid #30557c"></div>
<div class="a" style="left:1219.5px;top:146px;width:89.0px;height:71px;background:#f6b316;border-left:1px solid #30557c;border-top:1px solid #30557c"></div>
<div class="a" style="left:1308.5px;top:146px;width:89.0px;height:71px;background:#ec790e;border-left:1px solid #30557c;border-top:1px solid #30557c"></div>
<div class="a" style="left:1397.5px;top:146px;width:81.0px;height:71px;background:#f04818;border-left:1px solid #30557c;border-top:1px solid #30557c"></div>
<div class="a" style="left:1478.5px;top:146px;width:79.5px;height:71px;background:#f04818;border-left:1px solid #30557c;border-top:1px solid #30557c"></div>
<div class="a" style="left:1130.5px;top:217px;width:89.0px;height:55.5px;background:#6fbf1d;border-left:1px solid #30557c;border-top:1px solid #30557c"></div>
<div class="a" style="left:1219.5px;top:217px;width:89.0px;height:55.5px;background:#fcc40c;border-left:1px solid #30557c;border-top:1px solid #30557c"></div>
<div class="a" style="left:1308.5px;top:217px;width:89.0px;height:55.5px;background:#ec790e;border-left:1px solid #30557c;border-top:1px solid #30557c"></div>
<div class="a" style="left:1397.5px;top:217px;width:81.0px;height:55.5px;background:#f04818;border-left:1px solid #30557c;border-top:1px solid #30557c"></div>
<div class="a" style="left:1478.5px;top:217px;width:79.5px;height:55.5px;background:#f04818;border-left:1px solid #30557c;border-top:1px solid #30557c"></div>
<div class="a" style="left:1130.5px;top:272.5px;width:89.0px;height:76.5px;background:#6fbf1d;border-left:1px solid #30557c;border-top:1px solid #30557c"></div>
<div class="a" style="left:1219.5px;top:272.5px;width:89.0px;height:76.5px;background:#6fbf1d;border-left:1px solid #30557c;border-top:1px solid #30557c"></div>
<div class="a" style="left:1308.5px;top:272.5px;width:89.0px;height:76.5px;background:#fcc40c;border-left:1px solid #30557c;border-top:1px solid #30557c"></div>
<div class="a" style="left:1397.5px;top:272.5px;width:81.0px;height:76.5px;background:#ec790e;border-left:1px solid #30557c;border-top:1px solid #30557c"></div>
<div class="a" style="left:1478.5px;top:272.5px;width:79.5px;height:76.5px;background:#f04818;border-left:1px solid #30557c;border-top:1px solid #30557c"></div>
<div class="a" style="left:1130.5px;top:349px;width:89.0px;height:78px;background:#6fbf1d;border-left:1px solid #30557c;border-top:1px solid #30557c"></div>
<div class="a" style="left:1219.5px;top:349px;width:89.0px;height:78px;background:#6fbf1d;border-left:1px solid #30557c;border-top:1px solid #30557c"></div>
<div class="a" style="left:1308.5px;top:349px;width:89.0px;height:78px;background:#fcc40c;border-left:1px solid #30557c;border-top:1px solid #30557c"></div>
<div class="a" style="left:1397.5px;top:349px;width:81.0px;height:78px;background:#f6b316;border-left:1px solid #30557c;border-top:1px solid #30557c"></div>
<div class="a" style="left:1478.5px;top:349px;width:79.5px;height:78px;background:#ec790e;border-left:1px solid #30557c;border-top:1px solid #30557c"></div>
<div class="a" style="left:1130.5px;top:427px;width:89.0px;height:61px;background:#6fbf1d;border-left:1px solid #30557c;border-top:1px solid #30557c"></div>
<div class="a" style="left:1219.5px;top:427px;width:89.0px;height:61px;background:#6fbf1d;border-left:1px solid #30557c;border-top:1px solid #30557c"></div>
<div class="a" style="left:1308.5px;top:427px;width:89.0px;height:61px;background:#6fbf1d;border-left:1px solid #30557c;border-top:1px solid #30557c"></div>
<div class="a" style="left:1397.5px;top:427px;width:81.0px;height:61px;background:#f6b316;border-left:1px solid #30557c;border-top:1px solid #30557c"></div>
<div class="a" style="left:1478.5px;top:427px;width:79.5px;height:61px;background:#f6b316;border-left:1px solid #30557c;border-top:1px solid #30557c"></div>
<div class="a" style="left:1558px;top:146px;width:1px;height:342px;background:#e0201a"></div>
<div class="a" style="left:1130.5px;top:488px;width:428.5px;height:1px;background:#30557c"></div>
<div class="dot" style="left:1168px;top:186px"></div>
<div class="dot" style="left:1251px;top:229px"></div>
<div class="dot" style="left:1327px;top:290px"></div>
<div class="dot" style="left:1246px;top:388.5px"></div>
<div class="dot" style="left:1360px;top:368px"></div>
<div class="a" style="left:1082.50px;top:170.70px;font-size:15px;line-height:15px;color:#1c2229;transform:scaleX(1.0129);transform-origin:0 0;-webkit-text-stroke:0.45px #1c2229">Minor</div>
<div class="a" style="left:1054.00px;top:237.10px;font-size:15px;line-height:15px;color:#1c2229;transform:scaleX(1.0335);transform-origin:0 0;-webkit-text-stroke:0.45px #1c2229">Moderate</div>
<div class="a" style="left:1071.50px;top:303.90px;font-size:15px;line-height:15px;color:#1c2229;transform:scaleX(0.9634);transform-origin:0 0;-webkit-text-stroke:0.25px #1c2229">Serious</div>
<div class="a" style="left:1086.00px;top:374.90px;font-size:15px;line-height:15px;color:#1c2229;-webkit-text-stroke:0.45px #1c2229">Major</div>
<div class="a" style="left:1072.50px;top:444.70px;font-size:15px;line-height:15px;color:#1c2229;transform:scaleX(1.0252);transform-origin:0 0;-webkit-text-stroke:0.25px #1c2229">Critical</div>
<div class="a" style="left:1161.50px;top:500.63px;font-size:15.5px;line-height:15.5px;color:#1c2229;transform:scaleX(0.9224);transform-origin:0 0;-webkit-text-stroke:0.25px #1c2229">Rare</div>
<div class="a" style="left:1236.00px;top:500.63px;font-size:15.5px;line-height:15.5px;color:#1c2229;transform:scaleX(0.9859);transform-origin:0 0;-webkit-text-stroke:0.25px #1c2229">Uniikely</div>
<div class="a" style="left:1327.00px;top:500.63px;font-size:15.5px;line-height:15.5px;color:#1c2229;transform:scaleX(0.9387);transform-origin:0 0;-webkit-text-stroke:0.25px #1c2229">Possible</div>
<div class="a" style="left:1418.00px;top:500.63px;font-size:15.5px;line-height:15.5px;color:#1c2229;transform:scaleX(0.9838);transform-origin:0 0;-webkit-text-stroke:0.25px #1c2229">Likely</div>
<div class="a" style="left:1495.00px;top:500.63px;font-size:15.5px;line-height:15.5px;color:#1c2229;transform:scaleX(0.9806);transform-origin:0 0;-webkit-text-stroke:0.25px #1c2229">Certain</div>
<div class="a" style="left:1307px;top:528px;width:93px;height:16px;background:#fbfcfe"></div>
<div class="a" style="left:1309.50px;top:527.70px;font-size:15px;line-height:15px;color:#161c25;font-weight:bold">Likell hood</div>
<div class="a" style="left:986.5px;top:320.5px;width:120px;height:17px;font-size:15.5px;line-height:17px;letter-spacing:0.6px;text-align:center;color:#1c2229;-webkit-text-stroke:0.2px #1c2229;transform:rotate(-90deg)">Cennquort·oe</div>
<div class="a" style="left:1052.00px;top:567.03px;font-size:16.5px;line-height:16.5px;color:#161c25;font-weight:bold;transform:scaleX(0.9329);transform-origin:0 0">RISK VS TASK COMPLETION MAP</div>
<div class="a" style="left:1130.5px;top:601.5px;width:89.0px;height:64.5px;background:#fcc40c;border-left:1px solid #30557c;border-top:1px solid #30557c"></div>
<div class="a" style="left:1219.5px;top:601.5px;width:89.0px;height:64.5px;background:#f6b316;border-left:1px solid #30557c;border-top:1px solid #30557c"></div>
<div class="a" style="left:1308.5px;top:601.5px;width:89.0px;height:64.5px;background:#ec790e;border-left:1px solid #30557c;border-top:1px solid #30557c"></div>
<div class="a" style="left:1397.5px;top:601.5px;width:81.0px;height:64.5px;background:#f04818;border-left:1px solid #30557c;border-top:1px solid #30557c"></div>
<div class="a" style="left:1478.5px;top:601.5px;width:79.5px;height:64.5px;background:#f04818;border-left:1px solid #30557c;border-top:1px solid #30557c"></div>
<div class="a" style="left:1130.5px;top:666px;width:89.0px;height:57px;background:#fcc40c;border-left:1px solid #30557c;border-top:1px solid #30557c"></div>
<div class="a" style="left:1219.5px;top:666px;width:89.0px;height:57px;background:#f6b316;border-left:1px solid #30557c;border-top:1px solid #30557c"></div>
<div class="a" style="left:1308.5px;top:666px;width:89.0px;height:57px;background:#ec790e;border-left:1px solid #30557c;border-top:1px solid #30557c"></div>
<div class="a" style="left:1397.5px;top:666px;width:81.0px;height:57px;background:#f04818;border-left:1px solid #30557c;border-top:1px solid #30557c"></div>
<div class="a" style="left:1478.5px;top:666px;width:79.5px;height:57px;background:#f04818;border-left:1px solid #30557c;border-top:1px solid #30557c"></div>
<div class="a" style="left:1130.5px;top:723px;width:89.0px;height:74.5px;background:#6fbf1d;border-left:1px solid #30557c;border-top:1px solid #30557c"></div>
<div class="a" style="left:1219.5px;top:723px;width:89.0px;height:74.5px;background:#6fbf1d;border-left:1px solid #30557c;border-top:1px solid #30557c"></div>
<div class="a" style="left:1308.5px;top:723px;width:89.0px;height:74.5px;background:#fcc40c;border-left:1px solid #30557c;border-top:1px solid #30557c"></div>
<div class="a" style="left:1397.5px;top:723px;width:81.0px;height:74.5px;background:#ec790e;border-left:1px solid #30557c;border-top:1px solid #30557c"></div>
<div class="a" style="left:1478.5px;top:723px;width:79.5px;height:74.5px;background:#f04818;border-left:1px solid #30557c;border-top:1px solid #30557c"></div>
<div class="a" style="left:1130.5px;top:797.5px;width:89.0px;height:68.0px;background:#6fbf1d;border-left:1px solid #30557c;border-top:1px solid #30557c"></div>
<div class="a" style="left:1219.5px;top:797.5px;width:89.0px;height:68.0px;background:#6fbf1d;border-left:1px solid #30557c;border-top:1px solid #30557c"></div>
<div class="a" style="left:1308.5px;top:797.5px;width:89.0px;height:68.0px;background:#fcc40c;border-left:1px solid #30557c;border-top:1px solid #30557c"></div>
<div class="a" style="left:1397.5px;top:797.5px;width:81.0px;height:68.0px;background:#f6b316;border-left:1px solid #30557c;border-top:1px solid #30557c"></div>
<div class="a" style="left:1478.5px;top:797.5px;width:79.5px;height:68.0px;background:#ec790e;border-left:1px solid #30557c;border-top:1px solid #30557c"></div>
<div class="a" style="left:1130.5px;top:865.5px;width:89.0px;height:61.5px;background:#6fbf1d;border-left:1px solid #30557c;border-top:1px solid #30557c"></div>
<div class="a" style="left:1219.5px;top:865.5px;width:89.0px;height:61.5px;background:#6fbf1d;border-left:1px solid #30557c;border-top:1px solid #30557c"></div>
<div class="a" style="left:1308.5px;top:865.5px;width:89.0px;height:61.5px;background:#6fbf1d;border-left:1px solid #30557c;border-top:1px solid #30557c"></div>
<div class="a" style="left:1397.5px;top:865.5px;width:81.0px;height:61.5px;background:#f6b316;border-left:1px solid #30557c;border-top:1px solid #30557c"></div>
<div class="a" style="left:1478.5px;top:865.5px;width:79.5px;height:61.5px;background:#f6b316;border-left:1px solid #30557c;border-top:1px solid #30557c"></div>
<div class="a" style="left:1558px;top:601.5px;width:1px;height:325.5px;background:#e0201a"></div>
<div class="a" style="left:1130.5px;top:927px;width:428.5px;height:1px;background:#30557c"></div>
<div class="dot" style="left:1250.5px;top:681px"></div>
<div class="dot" style="left:1314px;top:716.5px"></div>
<div class="dot" style="left:1327px;top:747.5px"></div>
<div class="a" style="left:1083.00px;top:629.30px;font-size:15px;line-height:15px;color:#1c2229;-webkit-text-stroke:0.5px #1c2229">Minor</div>
<div class="a" style="left:1076.50px;top:683.10px;font-size:15px;line-height:15px;color:#1c2229;transform:scaleX(0.7624);transform-origin:0 0;-webkit-text-stroke:0.25px #1c2229">Utlholly</div>
<div class="a" style="left:1089.00px;top:749.50px;font-size:15px;line-height:15px;color:#1c2229;-webkit-text-stroke:0.5px #1c2229">High</div>
<div class="a" style="left:1093.50px;top:819.90px;font-size:15px;line-height:15px;color:#1c2229;transform:scaleX(0.9444);transform-origin:0 0;-webkit-text-stroke:0.5px #1c2229">Low</div>
<div class="a" style="left:1074.50px;top:883.50px;font-size:15px;line-height:15px;color:#1c2229;transform:scaleX(1.0143);transform-origin:0 0;-webkit-text-stroke:0.25px #1c2229">Critical</div>
<div class="a" style="left:1161.50px;top:939.38px;font-size:15.5px;line-height:15.5px;color:#1c2229;transform:scaleX(0.9224);transform-origin:0 0;-webkit-text-stroke:0.25px #1c2229">Rare</div>
<div class="a" style="left:1236.00px;top:939.38px;font-size:15.5px;line-height:15.5px;color:#1c2229;transform:scaleX(0.9859);transform-origin:0 0;-webkit-text-stroke:0.25px #1c2229">Unilkely</div>
<div class="a" style="left:1327.00px;top:939.38px;font-size:15.5px;line-height:15.5px;color:#1c2229;transform:scaleX(0.9387);transform-origin:0 0;-webkit-text-stroke:0.25px #1c2229">Possible</div>
<div class="a" style="left:1418.00px;top:939.38px;font-size:15.5px;line-height:15.5px;color:#1c2229;transform:scaleX(0.9838);transform-origin:0 0;-webkit-text-stroke:0.25px #1c2229">Likely</div>
<div class="a" style="left:1495.00px;top:939.38px;font-size:15.5px;line-height:15.5px;color:#1c2229;transform:scaleX(0.9806);transform-origin:0 0;-webkit-text-stroke:0.25px #1c2229">Certain</div>
<div class="a" style="left:1309.50px;top:973.30px;font-size:15px;line-height:15px;color:#161c25;font-weight:bold">Likell hood</div>
<div class="a" style="left:987.5px;top:747px;width:120px;height:17px;font-size:15px;line-height:17px;letter-spacing:0.2px;text-align:center;color:#1c2229;-webkit-text-stroke:0.2px #1c2229;transform:rotate(-90deg)">Cennfiy ıom SE</div>
</body></html>
